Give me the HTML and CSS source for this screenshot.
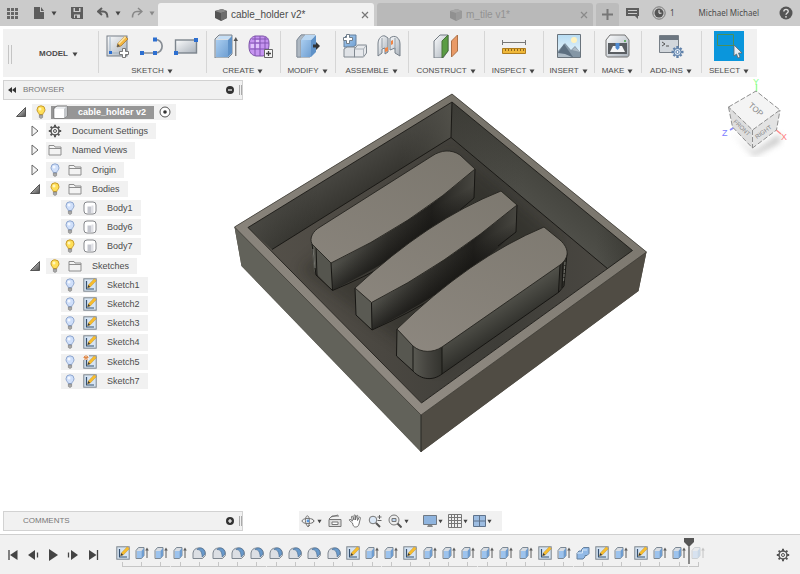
FILE: index.html
```html
<!DOCTYPE html>
<html lang="en">
<head>
<meta charset="utf-8">
<title>cable_holder v2</title>
<link rel="stylesheet" href="styles.css">
</head>
<body>
<svg class="defs" aria-hidden="true">
  <defs>
    <linearGradient id="steel" x1="0" y1="0" x2="1" y2="1"><stop offset="0" stop-color="#fbfcfd"/><stop offset="1" stop-color="#a9b1ba"/></linearGradient>
    <linearGradient id="blue" x1="0" y1="0" x2="1" y2="1"><stop offset="0" stop-color="#a9cdf0"/><stop offset="1" stop-color="#6f9fd2"/></linearGradient>
    <linearGradient id="sky" x1="0" y1="0" x2="0" y2="1"><stop offset="0" stop-color="#b7dcf3"/><stop offset="1" stop-color="#eef7fb"/></linearGradient>
    <linearGradient id="dark" x1="0" y1="0" x2="1" y2="1"><stop offset="0" stop-color="#e6e6e6"/><stop offset="1" stop-color="#4c4c4c"/></linearGradient>
  </defs>
  <symbol id="caret" viewBox="0 0 6 5"><path d="M.5.5h5L3 4.500z" fill="currentColor"/></symbol>
  <symbol id="cube" viewBox="0 0 14 14"><path d="M1 3 8 1l5 2v7l-6 3-6-3z" fill="#555"/><path d="M1 3 8 1l5 2-6 2z" fill="#8a8a8a"/><path d="M7 5v8l6-3V3z" fill="#6e6e6e"/></symbol>
  <symbol id="gear" viewBox="0 0 14 14"><path d="M7 .8v12.400M.8 7h12.400M2.600 2.600l8.800 8.800M11.400 2.600l-8.800 8.800" stroke="#555" stroke-width="2"/><circle cx="7" cy="7" r="4" fill="#f1f1f1" stroke="#555" stroke-width="1.500"/><circle cx="7" cy="7" r="1.500" fill="#f1f1f1" stroke="#555"/></symbol>
  <symbol id="bulb-on" viewBox="0 0 10 14"><path d="M5 .8a4 4 0 0 0-4 4C1 7 3 7.800 3.200 9.500h3.600C7 7.800 9 7 9 4.800a4 4 0 0 0-4-4z" fill="#ffdf57" stroke="#c79a2b"/><path d="M3.400 10h3.200v2.500L5 13.500l-1.600-1z" fill="#aaa" stroke="#777" stroke-width=".6"/><circle cx="4" cy="4" r="1.500" fill="#fff6c0"/></symbol>
  <symbol id="bulb-off" viewBox="0 0 10 14"><path d="M5 .8a4 4 0 0 0-4 4C1 7 3 7.800 3.200 9.500h3.600C7 7.800 9 7 9 4.800a4 4 0 0 0-4-4z" fill="#cfdffa" stroke="#8ea6cf"/><path d="M3.400 10h3.200v2.500L5 13.500l-1.600-1z" fill="#aaa" stroke="#777" stroke-width=".6"/><circle cx="4" cy="4" r="1.500" fill="#f4f8ff"/></symbol>
  <symbol id="folder" viewBox="0 0 14 12"><path d="M1 11V1.500h5l1 1.500h6v8z" fill="#f3f3f3" stroke="#8d8d8d"/><path d="M1 4.500h12" stroke="#8d8d8d"/></symbol>
  <symbol id="body" viewBox="0 0 14 14"><rect x="1" y="1" width="12" height="12" rx="3" fill="#fff" stroke="#85878b"/><path d="M4.500 5.500h4v6.500h-4z" fill="#c4c6ce"/><path d="M9.500 4.500v7.500" stroke="#e0e1e6" stroke-width="2"/></symbol>
  <symbol id="sketch" viewBox="0 0 14 14"><rect x=".8" y=".8" width="12.400" height="12.400" fill="#d6e4f3" stroke="#7d858d"/><path d="M3.500 3v8h7.500" fill="none" stroke="#34506f" stroke-width="1.200"/><path d="m4.500 9.800 1-3L11.300.7l2 2-6 6.200z" fill="#f8bd2c" stroke="#b98a2e" stroke-width=".4"/><path d="m4.500 9.800.9-2.800 1.800 1.900z" fill="#3a3a3a"/></symbol>
  <symbol id="extrude" viewBox="0 0 14 14"><path d="M1 4.500 3.500 1.500H9v8L6.500 12.500H1z" fill="#d9dde2" stroke="#7c8894"/><path d="M2 5h4.500v7H2z" fill="#9cc3ee"/><path d="M6.500 5 9 2v7.500l-2.500 3z" fill="#6f9dd0"/><path d="M12 12V3" stroke="#5c5c5c"/><path d="M10.200 4.500 12 1.500l1.800 3z" fill="#5c5c5c"/></symbol>
  <symbol id="fillet" viewBox="0 0 14 14"><path d="M1 12.500V7a6 6 0 0 1 6-5h1.500a5 5 0 0 1 4.800 5v2.500l-2.800 3z" fill="#dcdfe4" stroke="#7f8790"/><path d="M5 3.500C9 3.500 10 7 10.200 11l2.800-3C13 4 11 2 8 2 6.500 2 5.500 2.500 5 3.500z" fill="#6899cb" stroke="#4f7195" stroke-width=".7"/></symbol>
  <symbol id="combine" viewBox="0 0 14 14"><path d="M1 7 3 5h2.500V3.500l2-2H13v6l-2 2H9V11l-2 2H1z" fill="#91b9e6" stroke="#65809e"/><path d="M1 7h5.500V4H11" fill="none" stroke="#d7e7f7"/></symbol>
</svg>

<header class="topbar">
  <div class="quick">
    <button aria-label="Data panel"><svg width="13" height="13" viewBox="0 0 13 13"><path d="M1 1h3v3H1zM5 1h3v3H5zM9 1h3v3H9zM1 5h3v3H1zM5 5h3v3H5zM9 5h3v3H9zM1 9h3v3H1zM5 9h3v3H5zM9 9h3v3H9z" fill="#666"/></svg></button>
    <button class="split" aria-label="File"><svg width="12" height="14" viewBox="0 0 12 14"><path d="M1 1h6v5h4v7H1z" fill="#5d5d5d"/><path d="M8 1v4h3z" fill="#5d5d5d"/></svg><svg class="caret"><use href="#caret"/></svg></button>
    <button aria-label="Save"><svg width="12" height="12" viewBox="0 0 12 12"><path d="M0 0h12v12H1.500L0 10.500z" fill="#5d5d5d"/><path d="M2.500 1h7v4h-7zM3 7.500h6V11H3z" fill="#cbcbcb"/><path d="M4 1h4v3H4zM4 8.500h2V11H4z" fill="#5d5d5d"/></svg></button>
    <button class="split" aria-label="Undo"><svg width="12" height="12" viewBox="0 0 12 12"><path d="M5 1 1 4.500 5 8M1.500 4.500H6c3 0 4.500 2 4.500 6" fill="none" stroke="#5d5d5d" stroke-width="2"/></svg><svg class="caret"><use href="#caret"/></svg></button>
    <button class="split faded" aria-label="Redo"><svg width="12" height="12" viewBox="0 0 12 12"><path d="m7 1 4 3.500L7 8M10.500 4.500H6c-3 0-4.500 2-4.500 6" fill="none" stroke="#888" stroke-width="1.500"/></svg><svg class="caret"><use href="#caret"/></svg></button>
  </div>
  <div class="tab active"><svg width="14" height="14"><use href="#cube"/></svg><span>cable_holder v2*</span><button class="close" aria-label="Close cable_holder"><svg width="8" height="8" viewBox="0 0 8 8"><path d="m1 1 6 6M7 1 1 7" stroke="#777" stroke-width="1.200"/></svg></button></div>
  <div class="tab idle"><svg width="14" height="14" opacity=".4"><use href="#cube"/></svg><span>m_tile v1*</span><button class="close" aria-label="Close m_tile"><svg width="8" height="8" viewBox="0 0 8 8"><path d="m1 1 6 6M7 1 1 7" stroke="#8a8a8a" stroke-width="1.200"/></svg></button></div>
  <button class="newtab" aria-label="New design"><svg width="11" height="11" viewBox="0 0 11 11"><path d="M5.500 0v11M0 5.500h11" stroke="#777" stroke-width="2"/></svg></button>
  <div class="account">
    <button aria-label="Notifications"><svg width="13" height="12" viewBox="0 0 13 12"><path d="M0 1h13v8h-1v3L9 9H0z" fill="#5d5d5d"/><path d="M2 3.500h9M2 6.500h9" stroke="#cbcbcb"/></svg></button>
    <button class="jobs"><svg width="14" height="14" viewBox="0 0 14 14"><circle cx="7" cy="7" r="6.200" fill="#cbcbcb" stroke="#777"/><circle cx="7" cy="7" r="4.500" fill="#555"/><path d="M7 4v3.200h2.500" fill="none" stroke="#eee"/></svg>1</button>
    <button class="user">Michael Michael</button>
    <button aria-label="Help"><svg width="14" height="14" viewBox="0 0 14 14"><circle cx="7" cy="7" r="6.500" fill="#555"/><path d="M4.800 5.600c0-3 4.500-2.800 4.400-.2C9.200 7 7 7 7 8.800" fill="none" stroke="#ddd" stroke-width="1.400"/><circle cx="7" cy="10.800" r=".9" fill="#ddd"/></svg></button>
  </div>
</header>

<nav class="toolbar" aria-label="Toolbar">
  <div class="grip-cell"><span class="grip"></span><button class="model">MODEL<svg class="caret"><use href="#caret"/></svg></button></div>
  <div class="group"><div class="tools">
    <button aria-label="Create sketch"><svg width="24" height="24" viewBox="0 0 24 24"><rect x="1" y="2" width="20" height="20" fill="url(#steel)" stroke="#777f87"/><path d="M4 3v16h14" fill="none" stroke="#9eb3c6"/><rect x="3" y="17" width="3" height="3" fill="#2d6fd0"/><path d="m11 13 1-4 7-7 3 3-7 7z" fill="#f4b740" stroke="#9c7030" stroke-width=".7"/><path d="m12 9 7-7 1.200 1.200-7 7z" fill="#fbe3a4"/><path d="m11 13 .8-3 2.200 2.200z" fill="#555"/><path d="M16.500 14.500h3v3h3v3h-3v3h-3v-3h-3v-3h3z" fill="#fff" stroke="#777"/></svg></button>
    <button aria-label="Line"><svg width="24" height="24" viewBox="0 0 24 24"><path d="M2 19h13c10 0 9-14 0-13.500" fill="none" stroke="#888e95" stroke-width="1.700"/><path d="M0 17h4v4H0zM13 17h4v4h-4zM13 3.500h4v4h-4z" fill="#2d6fd0"/></svg></button>
    <button aria-label="Rectangle"><svg width="24" height="24" viewBox="0 0 24 24"><rect x="1.500" y="6" width="21" height="13" fill="url(#steel)" stroke="#7d858d" stroke-width="1.400"/><path d="M20 4h4v4h-4zM0 17h4v4H0z" fill="#2d6fd0"/></svg></button>
  </div><button class="menu">SKETCH<svg class="caret"><use href="#caret"/></svg></button></div>
  <div class="group"><div class="tools">
    <button aria-label="Extrude"><svg width="24" height="24" viewBox="0 0 24 24"><path d="M1 5 5 1h13v19l-4 4H1z" fill="#dadfe4" stroke="#76828e"/><path d="M2 6h12v17H2z" fill="url(#blue)"/><path d="m14 6 4-4v17l-4 4z" fill="#5f92c8"/><path d="m3 5 3-3h11l-3 3z" fill="#c5def5"/><path d="M21.800 22V5" stroke="#555"/><path d="m19.500 7 2.300-4L24 7z" fill="#555"/></svg></button>
    <button aria-label="Create form"><svg width="25" height="24" viewBox="0 0 25 24"><path d="M7 2h8c5 1 6 3 6 8s-2 11-6 12H8C3 21 1 18 1 12S3 3 7 2z" fill="#c594f0" stroke="#7b52a5"/><path d="M1 9h20M2 15h18M4 5h16M7 2v20M12 2v20M17 3v18" stroke="#8254b3" fill="none"/><path d="M8 6h3v2H8zM8 10h3v4H8zM3 10h3v4H3z" fill="#e0c4fb"/><path d="M16.500 15.500h8v8h-8z" fill="#f5f5f5" stroke="#666"/><path d="M20.500 17v5M18 19.500h5" stroke="#444" stroke-width="1.300"/></svg></button>
  </div><button class="menu">CREATE<svg class="caret"><use href="#caret"/></svg></button></div>
  <div class="group"><div class="tools">
    <button aria-label="Press pull"><svg width="24" height="24" viewBox="0 0 24 24"><path d="M1 6 5 1h14v17l-5 5H1z" fill="#d9dde2" stroke="#76828e"/><path d="M1 6 5 1h4L5 6v17H1z" fill="#aeb8c2" stroke="#76828e" stroke-width=".6"/><path d="M5 6h10v17H5z" fill="url(#blue)"/><path d="m15 6 5-5v17l-5 5z" fill="#5f92c8"/><path d="m5 6 4-5h11l-5 5z" fill="#bad7f2"/><path d="M17 10.500h3V8l4 4-4 4v-2.500h-3z" fill="#333"/></svg></button>
  </div><button class="menu">MODIFY<svg class="caret"><use href="#caret"/></svg></button></div>
  <div class="group"><div class="tools">
    <button aria-label="New component"><svg width="25" height="24" viewBox="0 0 25 24"><path d="M2 4 5 1h9v10l-3 2H2z" fill="url(#blue)" stroke="#65809e"/><path d="m2 15 3-2h8v10H2z" fill="#dfe2e6" stroke="#808890"/><path d="m12.500 15 3-4h9v8l-3 4h-9z" fill="#e7e9ec" stroke="#808890"/><path d="M12.500 15h9l3-4M21.500 15v8" fill="none" stroke="#a9b0b7"/><path d="M4.500.5h3v3h3v3h-3v3h-3v-3h-3v-3h3z" fill="#fff" stroke="#717e8a"/></svg></button>
    <button aria-label="Joint"><svg width="24" height="24" viewBox="0 0 24 24"><path d="M1 10c0-6 4-9 7-8l3 2v14l-3 2v-6l-3 1v4l-4 3z" fill="url(#steel)" stroke="#77808a"/><path d="M13 4c5-4 10 0 10 6v12l-5-3v-5l-5 2z" fill="url(#steel)" stroke="#77808a"/><path d="M5 4v10M18 4v12" stroke="#98a1aa"/><path d="m8 14 3-1v4l-3 1zM14 7l2-1v4l-2 1z" fill="#f08545"/></svg></button>
  </div><button class="menu">ASSEMBLE<svg class="caret"><use href="#caret"/></svg></button></div>
  <div class="group"><div class="tools">
    <button aria-label="Offset plane"><svg width="26" height="24" viewBox="0 0 26 24"><path d="m1 7 6-6h8v16l-5 7H1z" fill="url(#steel)" stroke="#737b82"/><path d="m9 7 6-6v16l-6 7z" fill="#5a9c43" stroke="#487338"/><path d="m18.500 7 6-6v16l-6 6z" fill="#e99a66" stroke="#ad7147"/></svg></button>
  </div><button class="menu">CONSTRUCT<svg class="caret"><use href="#caret"/></svg></button></div>
  <div class="group"><div class="tools">
    <button aria-label="Measure"><svg width="24" height="24" viewBox="0 0 24 24"><path d="M0 8.500h24M.5 6v5M23.500 6v5" stroke="#777"/><path d="M.5 14.500h23v5H.5z" fill="#efb83a" stroke="#b07d1d"/><path d="M3.500 15v2M6.500 15v2M9.500 15v2M12.500 15v2M15.500 15v2M18.500 15v2M21.500 15v2" stroke="#8c651e"/></svg></button>
  </div><button class="menu">INSPECT<svg class="caret"><use href="#caret"/></svg></button></div>
  <div class="group"><div class="tools">
    <button aria-label="Insert image"><svg width="24" height="24" viewBox="0 0 24 24"><path d="M.5.500h23v23H.5z" fill="url(#sky)" stroke="#69737c"/><circle cx="17" cy="6" r="3" fill="#fff2be"/><path d="M1 17 8 9l6 7 4-4 5 6v5H1z" fill="#8496a5"/><path d="m7 10 9 13H1v-4z" fill="#5d6f80"/><path d="m1 19 7 1 7 3H1zM15 16l3-3 5 5z" fill="#acbac5"/></svg></button>
  </div><button class="menu">INSERT<svg class="caret"><use href="#caret"/></svg></button></div>
  <div class="group"><div class="tools">
    <button aria-label="3D print"><svg width="25" height="24" viewBox="0 0 25 24"><path d="m1 6 4-5h15l4 5v15c0 1-1 2-2 2H3c-1 0-2-1-2-2z" fill="url(#steel)" stroke="#737373"/><path d="M3 9h19v11H3z" fill="#5a5e62"/><path d="m5 18 3-6h9l3 6z" fill="#f4f5f6"/><path d="M10.500 9h4v5l-2 2-2-2z" fill="#4f8ad0"/><circle cx="20" cy="7" r="1" fill="#47a047"/></svg></button>
  </div><button class="menu">MAKE<svg class="caret"><use href="#caret"/></svg></button></div>
  <div class="group"><div class="tools">
    <button aria-label="Scripts and add-ins"><svg width="25" height="24" viewBox="0 0 25 24"><path d="M.5 1.500h19v17H.5z" fill="#d2d7dc" stroke="#777f87"/><path d="M1 2h18v4H1z" fill="#6c7680"/><path d="m3 8 3 2-3 2M7 12h3" fill="none" stroke="#555"/><path d="M18.500 12v12M12.500 18h12M14.500 14l8 8M22.500 14l-8 8" stroke="#6081a9" stroke-width="2.400"/><circle cx="18.500" cy="18" r="3.600" fill="#d6e6f6" stroke="#6081a9"/><circle cx="18.500" cy="18" r="1.500" fill="#fff" stroke="#6081a9"/></svg></button>
  </div><button class="menu">ADD-INS<svg class="caret"><use href="#caret"/></svg></button></div>
  <div class="group"><div class="tools">
    <button class="picked" aria-label="Select"><svg width="30" height="30" viewBox="0 0 30 30"><path d="M3.500 3.500h16v11h-16z" fill="none" stroke="#4a8f5c"/><path d="M20 14v11l2.500-2 1.500 4 2-1-1.500-4H28z" fill="#e8eef3" stroke="#666" stroke-width=".8"/></svg></button>
  </div><button class="menu">SELECT<svg class="caret"><use href="#caret"/></svg></button></div>
</nav>

<main class="workspace">
  <svg class="scene" width="418" height="364" viewBox="232 91 418 364" role="img" aria-label="Cable holder model">
    <defs>
      <linearGradient id="top" gradientUnits="userSpaceOnUse" x1="400" y1="420" x2="520" y2="130"><stop offset="0" stop-color="#928c84"/><stop offset="1" stop-color="#78746b"/></linearGradient>
      <linearGradient id="wallL" gradientUnits="userSpaceOnUse" x1="320" y1="185" x2="352" y2="235"><stop offset="0" stop-color="#464540"/><stop offset=".55" stop-color="#35342f"/><stop offset="1" stop-color="#24231f"/></linearGradient>
      <linearGradient id="wallLs" x1="0" x2="1" y1="0" y2="0"><stop offset="0" stop-color="#4c4b45" stop-opacity=".5"/><stop offset=".35" stop-color="#30302b" stop-opacity="0"/><stop offset=".75" stop-color="#4c4b45" stop-opacity="0"/><stop offset="1" stop-color="#55544d" stop-opacity=".8"/></linearGradient>
      <linearGradient id="wallR" gradientUnits="userSpaceOnUse" x1="550" y1="180" x2="525" y2="212"><stop offset="0" stop-color="#45453f"/><stop offset="1" stop-color="#51514b"/></linearGradient>
      <linearGradient id="wallRs" x1="0" x2="1" y1="0" y2="0"><stop offset="0" stop-color="#33322d" stop-opacity=".5"/><stop offset=".4" stop-color="#33322d" stop-opacity="0"/><stop offset=".8" stop-color="#33322d" stop-opacity="0"/><stop offset="1" stop-color="#2c2b26" stop-opacity=".4"/></linearGradient>
      <linearGradient id="floor" x1="0" x2="1" y1="0" y2="0"><stop offset="0" stop-color="#55514a"/><stop offset=".35" stop-color="#4a4741"/><stop offset=".65" stop-color="#3e3d38"/><stop offset="1" stop-color="#4d4a44"/></linearGradient>
      <linearGradient id="side1" x1="0" x2="1" y1="0" y2="0"><stop offset="0" stop-color="#50504a"/><stop offset=".4" stop-color="#2f2e2a"/><stop offset=".7" stop-color="#201f1c"/><stop offset="1" stop-color="#484741"/></linearGradient>
      <linearGradient id="drop" gradientUnits="userSpaceOnUse" x1="410" y1="222" x2="425" y2="248"><stop offset="0" stop-color="#11100e" stop-opacity="0"/><stop offset="1" stop-color="#11100e" stop-opacity=".85"/></linearGradient>
      <linearGradient id="drop2" gradientUnits="userSpaceOnUse" x1="445" y1="262" x2="460" y2="288"><stop offset="0" stop-color="#11100e" stop-opacity="0"/><stop offset="1" stop-color="#11100e" stop-opacity=".85"/></linearGradient>
      <linearGradient id="side3" gradientUnits="userSpaceOnUse" x1="490" y1="308" x2="508" y2="336"><stop offset="0" stop-color="#53534c"/><stop offset="1" stop-color="#2a2a26"/></linearGradient>
      <linearGradient id="round" x1="0" x2="1" y1="0" y2="0"><stop offset="0" stop-color="#5a5a53"/><stop offset=".5" stop-color="#45443f"/><stop offset="1" stop-color="#33332e"/></linearGradient>
      <filter id="soft" x="-20%" y="-20%" width="140%" height="140%"><feGaussianBlur stdDeviation="7"/></filter>
      <clipPath id="well"><path d="M248 227.500 452 102 632.500 250.500 421.500 403z"/></clipPath>
    </defs>
    <path d="M234.500 227 452 94l194.500 158-8 39L421 452 241.500 266z" fill="#504c44"/>
    <path d="M234.500 227 421 415v37L241.500 266z" fill="#62625a"/>
    <path d="M421 415 646.500 252l-8 39L421 452z" fill="#504c44"/>
    <path d="M234.500 227 452 94l194.500 158L421 415z" fill="url(#top)" stroke="#3b3934" stroke-width=".7"/>
    <path d="M421 415v37" stroke="#292824"/>
    <g clip-path="url(#well)">
      <path d="M248 227.500 452 102 632.500 250.500 421.500 403z" fill="url(#floor)"/>
      <path d="M300 270 450 150 560 240 440 370z" fill="#24231f" opacity=".35" filter="url(#soft)"/>
      <path d="M452 102 248 227.500l24 22L451 137.500z" fill="url(#wallL)"/>
      <path d="M452 102 248 227.500l24 22L451 137.500z" fill="url(#wallLs)"/>
      <path d="M452 102l180.500 148.500L608 269 451 137.500z" fill="url(#wallR)"/>
      <path d="M452 102l180.500 148.500L608 269 451 137.500z" fill="url(#wallRs)"/>
      <path d="M272 249.500 451 137.500 608 269M452 102l-1 35.500" fill="none" stroke="#161512" stroke-width=".9"/>
    </g>
    <path d="M248 227.500 452 102 632.500 250.500 421.500 403z" fill="none" stroke="#1d1c19" stroke-width=".9"/>

    <path d="M310.500 240 314 271l18.500 19.500L332 262z" fill="#55554e"/>
    <path d="M331 263Q413 224 475 169l-1 29q-52 48-141.500 92.500z" fill="url(#side1)"/>
    <path d="M331 263Q413 224 475 169l-1 29q-52 48-141.500 92.500z" fill="url(#drop)"/>
    <path d="M312 244l4 31 16.500 15.500Q400 262 428 236M316 246l1 30M331 263l1.500 27.500M475 169l-1 29-14 12" fill="none" stroke="#171613"/>
    <path d="M313 249l2 19" stroke="#8b8b85" stroke-width=".8"/>
    <path d="M331 263 312 244c-3-6 1-13 8-17L432 156c9-6 19-7 28-1l15 14Q413 224 331 263z" fill="url(#top)" stroke="#25241f" stroke-width=".9"/>

    <path d="M355 288l1 27 16 15-.5-27.500z" fill="#5a5a53"/>
    <path d="M371.500 302.500Q444 266 517 205l-1 27q-60 57-144 98z" fill="url(#side1)"/>
    <path d="M371.500 302.500Q444 266 517 205l-1 27q-60 57-144 98z" fill="url(#drop2)"/>
    <path d="M355 288l1 27 16 15q40-18 64-34M371.500 302.500l.5 27.500M517 205l-1 27-18 14" fill="none" stroke="#171613"/>
    <path d="M355 288Q428 220 501 191l16 14Q444 266 371.500 302.500z" fill="url(#top)" stroke="#25241f" stroke-width=".9"/>

    <path d="M397 329l-.5 27L413 371V346z" fill="#575750"/>
    <path d="M413 345v26c8 9 20 10 29 3v-28z" fill="url(#round)"/>
    <path d="M442 347 560 264l-1 28L442 374z" fill="url(#side3)"/>
    <path d="M560 264c5-3 7-8 7-14l-3 35-5 7z" fill="#33322d"/>
    <path d="M397 329l-.5 27L413 371c8 9 20 10 29 3l117-82 5-6 3-33M413 345v26M442 347v27M560 265l-1.500 27M563 262l-1 26" fill="none" stroke="#171613"/>
    <path d="M565 262l-1.500 20" stroke="#85857e" stroke-width=".8" stroke-dasharray="3 1"/>
    <path d="M397 329Q470 258 544 227l16 13c10 9 9 18 0 25L442 347c-9 6-21 6-29-1z" fill="url(#top)" stroke="#25241f" stroke-width=".9"/>
  </svg>

  <section class="browser">
    <div class="panel-head"><button aria-label="Collapse browser"><svg width="8" height="6" viewBox="0 0 8 6"><path d="M4 0v6L0 3zM8 0v6L4 3z" fill="#333"/></svg></button><h2>BROWSER</h2><button class="round" aria-label="Minimise"><svg width="8" height="8" viewBox="0 0 8 8"><circle cx="4" cy="4" r="4" fill="#333"/><path d="M2 4h4" stroke="#fff" stroke-width="1.200"/></svg></button><span class="edge"></span></div>
    <ul class="tree">
      <li class="root"><svg class="twist" viewBox="0 0 10 10"><path d="M.5 9.500h9v-9z" fill="url(#dark)" stroke="#555"/></svg><div class="node"><svg class="bulb"><use href="#bulb-on"/></svg><span class="chip"><svg width="15" height="14" viewBox="0 0 15 14"><path d="m1 3 3-2h10v10l-3 2H1z" fill="#eceef0" stroke="#777"/><path d="m11 4 3-3v10l-3 2z" fill="#c5c8cb"/><path d="M1.500 4H11v9H1.500z" fill="#fff"/></svg>cable_holder v2</span><svg width="12" height="12" viewBox="0 0 12 12"><circle cx="6" cy="6" r="5" fill="#fff" stroke="#555"/><circle cx="6" cy="6" r="1.800" fill="#333"/></svg></div></li>
      <li class="l1"><svg class="twist" viewBox="0 0 10 12"><path d="M2 1v10l6-5z" fill="#f4f4f4" stroke="#666"/></svg><div class="node plain"><svg width="14" height="14"><use href="#gear"/></svg><span>Document Settings</span></div></li>
      <li class="l1"><svg class="twist" viewBox="0 0 10 12"><path d="M2 1v10l6-5z" fill="#f4f4f4" stroke="#666"/></svg><div class="node plain"><svg width="14" height="12"><use href="#folder"/></svg><span>Named Views</span></div></li>
      <li class="l1"><svg class="twist" viewBox="0 0 10 12"><path d="M2 1v10l6-5z" fill="#f4f4f4" stroke="#666"/></svg><div class="node"><svg class="bulb"><use href="#bulb-off"/></svg><svg width="14" height="12"><use href="#folder"/></svg><span>Origin</span></div></li>
      <li class="l1"><svg class="twist" viewBox="0 0 10 10"><path d="M.5 9.500h9v-9z" fill="url(#dark)" stroke="#555"/></svg><div class="node"><svg class="bulb"><use href="#bulb-on"/></svg><svg width="14" height="12"><use href="#folder"/></svg><span>Bodies</span></div></li>
      <li class="l2"><div class="node"><svg class="bulb"><use href="#bulb-off"/></svg><svg width="14" height="14"><use href="#body"/></svg><span>Body1</span></div></li>
      <li class="l2"><div class="node"><svg class="bulb"><use href="#bulb-off"/></svg><svg width="14" height="14"><use href="#body"/></svg><span>Body6</span></div></li>
      <li class="l2"><div class="node"><svg class="bulb"><use href="#bulb-on"/></svg><svg width="14" height="14"><use href="#body"/></svg><span>Body7</span></div></li>
      <li class="l1"><svg class="twist" viewBox="0 0 10 10"><path d="M.5 9.500h9v-9z" fill="url(#dark)" stroke="#555"/></svg><div class="node"><svg class="bulb"><use href="#bulb-on"/></svg><svg width="14" height="12"><use href="#folder"/></svg><span>Sketches</span></div></li>
      <li class="l2"><div class="node"><svg class="bulb"><use href="#bulb-off"/></svg><svg width="14" height="14"><use href="#sketch"/></svg><span>Sketch1</span></div></li>
      <li class="l2"><div class="node"><svg class="bulb"><use href="#bulb-off"/></svg><svg width="14" height="14"><use href="#sketch"/></svg><span>Sketch2</span></div></li>
      <li class="l2"><div class="node"><svg class="bulb"><use href="#bulb-off"/></svg><svg width="14" height="14"><use href="#sketch"/></svg><span>Sketch3</span></div></li>
      <li class="l2"><div class="node"><svg class="bulb"><use href="#bulb-off"/></svg><svg width="14" height="14"><use href="#sketch"/></svg><span>Sketch4</span></div></li>
      <li class="l2"><div class="node"><svg class="bulb"><use href="#bulb-off"/></svg><svg width="14" height="14" viewBox="0 0 14 14"><use href="#sketch" width="14" height="14"/><path d="M0 0h6v5H0z" fill="#f1f1f1"/><path d="M3 0v5M.5 2.500h5M1 1l4 3.500M5 1 1 4.500" stroke="#e08a4a"/></svg><span>Sketch5</span></div></li>
      <li class="l2"><div class="node"><svg class="bulb"><use href="#bulb-off"/></svg><svg width="14" height="14"><use href="#sketch"/></svg><span>Sketch7</span></div></li>
    </ul>
  </section>

  <svg class="viewcube" width="72" height="80" viewBox="719 77 72 80" role="img" aria-label="View cube">
    <defs><filter id="blur"><feGaussianBlur stdDeviation="3"/></filter></defs>
    <path d="M732 132 754 152l26-18v8l-26 14z" fill="#999" opacity=".6" filter="url(#blur)"/>
    <path d="M756.500 84v8" stroke="#9dff9d" stroke-width="1.500"/><path d="m738 125-8 5" stroke="#8a8aff" stroke-width="1.500"/><path d="m775 129 6 5" stroke="#ff8a8a" stroke-width="1.500"/>
    <path d="M728.500 107 756 91l24 19-27.500 20z" fill="#f4f4f4"/><path d="M728.500 107l24 23v18l-20-21z" fill="#dedede"/><path d="M780 110l-27.500 20v18l24-18z" fill="#e3e3e3"/>
    <path d="M728.500 107 756 91l24 19-27.500 20zM728.500 107l4 20 20 21 24-18 3.500-20M752.500 130v18" fill="none" stroke="#8f8f8f" stroke-dasharray="5 2"/>
    <text class="face" transform="translate(748 106) rotate(42)">TOP</text>
    <text class="face small" transform="translate(733 122) rotate(44)">FRONT</text>
    <text class="face small" transform="translate(757 139) rotate(-36)">RIGHT</text>
    <text class="axis" x="753" y="85" fill="#8cff8c">Y</text><text class="axis" x="722" y="136" fill="#8080ff">Z</text><text class="axis" x="781" y="140" fill="#ff8080">X</text>
  </svg>

  <section class="comments panel-head"><h2>COMMENTS</h2><button class="round" aria-label="Add comment"><svg width="8" height="8" viewBox="0 0 8 8"><circle cx="4" cy="4" r="4" fill="#333"/><path d="M2 4h4M4 2v4" stroke="#fff" stroke-width="1.200"/></svg></button><span class="edge"></span></section>

  <nav class="navbar" aria-label="View controls">
    <button class="split" aria-label="Orbit"><svg width="14" height="14" viewBox="0 0 14 14"><ellipse cx="7" cy="7" rx="6" ry="2.600" fill="none" stroke="#777"/><path d="M5 10c-1.500-6 .5-9 2-8s2 7 .5 10" fill="none" stroke="#777"/><path d="m5 10 2 3 2-2M11 5l2 2-2 2" fill="none" stroke="#777"/><circle cx="7" cy="7" r="1.400" fill="#5b9ae0"/></svg><svg class="caret"><use href="#caret"/></svg></button>
    <button aria-label="Look at"><svg width="14" height="14" viewBox="0 0 14 14"><path d="m3 3 7-2M1 5l3-3h7" fill="none" stroke="#777"/><path d="M1 5.500h12v7H1z" fill="#ddd" stroke="#777"/><path d="M4 8h6v2.500H4z" fill="#fff" stroke="#777"/></svg></button>
    <button aria-label="Pan"><svg width="14" height="14" viewBox="0 0 14 14"><path d="M4.500 9 1.500 6.500c-.8-1 .5-1.500 1.500-.7L4.500 7 3.500 3c0-1.200 1.200-1 1.500 0L6 6V1.800c0-1.200 1.500-1.200 1.500 0V6l1-4c.3-1 1.500-.8 1.400.2L9.500 6.500l1.500-3c.6-.8 1.600-.3 1.400.6L11 10c-.5 2-1.500 3-3.500 3S5 11.500 4.500 9z" fill="#fff" stroke="#666" stroke-width=".9"/></svg></button>
    <button aria-label="Zoom"><svg width="14" height="14" viewBox="0 0 14 14"><circle cx="5" cy="6" r="3.800" fill="#dce9f7" stroke="#777"/><path d="m8 9 4 4" stroke="#555" stroke-width="2"/><path d="M11.500 1v4M9.500 3h4M9.500 6.500h4" stroke="#666"/></svg></button>
    <button class="split" aria-label="Fit"><svg width="14" height="14" viewBox="0 0 14 14"><circle cx="6" cy="6" r="5" fill="#eee" stroke="#777"/><path d="M4 4.500h4v3H4z" fill="#bcd4ee" stroke="#777"/><path d="m9.500 9.500 4 4" stroke="#555" stroke-width="2"/></svg><svg class="caret"><use href="#caret"/></svg></button>
    <div class="views">
      <button class="split" aria-label="Display settings"><svg width="14" height="14" viewBox="0 0 14 14"><path d="M.5 1.500h13v9H.5z" fill="#8fb4de" stroke="#707983"/><path d="M5 11h4l1 2H4z" fill="#888"/></svg><svg class="caret"><use href="#caret"/></svg></button>
      <button class="split" aria-label="Grid"><svg width="14" height="14" viewBox="0 0 14 14"><path d="M.5.500h13v13H.5zM3.500 0v14M6.500 0v14M9.500 0v14M0 3.500h14M0 6.500h14M0 9.500h14" fill="none" stroke="#777"/></svg><svg class="caret"><use href="#caret"/></svg></button>
      <button class="split" aria-label="Viewports"><svg width="13" height="12" viewBox="0 0 13 12"><path d="M.5.500h12v11H.5zM6.500 0v12M0 6h13" fill="#9dbde2" stroke="#5f738c"/></svg><svg class="caret"><use href="#caret"/></svg></button>
    </div>
  </nav>
</main>

<footer class="timeline">
  <div class="playback">
    <button aria-label="Go to start"><svg width="12" height="12" viewBox="0 0 12 12"><path d="M2 1v10" stroke="#444" stroke-width="1.300"/><path d="M10.500 1v10L3 6z" fill="#444"/></svg></button>
    <button aria-label="Step back"><svg width="12" height="12" viewBox="0 0 12 12"><path d="M8 1v10L1 6z" fill="#444"/><path d="M10.500 3.500v5" stroke="#444" stroke-width="1.300"/></svg></button>
    <button aria-label="Play"><svg width="12" height="12" viewBox="0 0 12 12"><path d="M2 0v12l9-6z" fill="#444"/></svg></button>
    <button aria-label="Step forward"><svg width="12" height="12" viewBox="0 0 12 12"><path d="M4 1v10l7-5z" fill="#444"/><path d="M1.500 3.500v5" stroke="#444" stroke-width="1.300"/></svg></button>
    <button aria-label="Go to end"><svg width="12" height="12" viewBox="0 0 12 12"><path d="M10.500 1v10" stroke="#444" stroke-width="1.300"/><path d="M2 1v10l7.500-5z" fill="#444"/></svg></button>
  </div>
  <ol class="features">
    <li><svg><use href="#sketch"/></svg></li>
    <li><svg><use href="#extrude"/></svg></li>
    <li><svg><use href="#extrude"/></svg></li>
    <li><svg><use href="#extrude"/></svg></li>
    <li><svg><use href="#fillet"/></svg></li>
    <li><svg><use href="#fillet"/></svg></li>
    <li><svg><use href="#fillet"/></svg></li>
    <li><svg><use href="#fillet"/></svg></li>
    <li><svg><use href="#fillet"/></svg></li>
    <li><svg><use href="#fillet"/></svg></li>
    <li><svg><use href="#fillet"/></svg></li>
    <li><svg><use href="#fillet"/></svg></li>
    <li><svg><use href="#sketch"/></svg></li>
    <li><svg><use href="#extrude"/></svg></li>
    <li><svg><use href="#extrude"/></svg></li>
    <li><svg><use href="#sketch"/></svg></li>
    <li><svg><use href="#extrude"/></svg></li>
    <li><svg><use href="#extrude"/></svg></li>
    <li><svg><use href="#extrude"/></svg></li>
    <li><svg><use href="#extrude"/></svg></li>
    <li><svg><use href="#extrude"/></svg></li>
    <li><svg><use href="#extrude"/></svg></li>
    <li><svg><use href="#sketch"/></svg></li>
    <li><svg><use href="#extrude"/></svg></li>
    <li><svg><use href="#combine"/></svg></li>
    <li><svg><use href="#sketch"/></svg></li>
    <li><svg><use href="#extrude"/></svg></li>
    <li><svg><use href="#sketch"/></svg></li>
    <li><svg><use href="#extrude"/></svg></li>
    <li><svg><use href="#extrude"/></svg></li>
    <li class="rolled"><svg><use href="#extrude"/></svg><span class="marker"><svg viewBox="0 0 10 26"><path d="M0 0h10v4L6 8H4L0 4z" fill="#555"/><path d="M5 6v20" stroke="#555" stroke-width="1.300"/></svg></span></li>
  </ol>
  <button class="settings" aria-label="Timeline settings"><svg width="14" height="14"><use href="#gear"/></svg></button>
</footer>
</body>
</html>
```

FILE: styles.css
```css
* { box-sizing: border-box; }

body {
  margin: 0;
  min-height: 100vh;
  display: flex;
  flex-direction: column;
  background: #fff;
  color: #4c4c4c;
  font: 9px/12px "Liberation Sans", Arial, sans-serif;
}

button {
  display: flex;
  align-items: center;
  margin: 0;
  padding: 0;
  border: 0;
  background: none;
  color: inherit;
  font: inherit;
  white-space: nowrap;
}

svg { display: block; flex: none; }
ul, ol { margin: 0; padding: 0; list-style: none; }
h2 { margin: 0; font: inherit; }

.defs { position: absolute; width: 0; height: 0; }
.caret { width: 6px; height: 5px; color: #444; }

/* Top bar */
.topbar {
  display: flex;
  align-items: stretch;
  height: 26px;
  padding-top: 3px;
  background: #cbcbcb;
}
.quick {
  display: flex;
  align-items: center;
  gap: 14px;
  flex: none;
  width: 158px;
  padding: 0 0 3px 6px;
}
.quick .split { gap: 6px; }
.quick .faded { margin-left: -4px; }
.faded .caret { color: #888; }

.tab {
  display: flex;
  align-items: center;
  flex: 0 1 216px;
  margin-right: 3px;
  padding: 0 5px 0 56px;
  gap: 3px;
  border-radius: 3px 3px 0 0;
  background: #f1f1f1;
  font-size: 10px;
}
.tab.idle { padding-left: 72px; background: #b9b9b9; color: #929292; }
.tab .close { margin-left: auto; }
.newtab {
  justify-content: center;
  width: 23px;
  border-radius: 3px 3px 0 0;
  background: #bcbcbc;
}
.account {
  display: flex;
  align-items: center;
  margin-left: auto;
  padding: 0 7px 3px 0;
  font: 8px/12px "Noto Sans", sans-serif;
}
.jobs { gap: 4px; margin: 0 24px 0 13px; }
.user { margin-right: 20px; }

/* Toolbar */
.toolbar {
  display: grid;
  grid-template-columns: 95px 108px 74px 55px 73px 76px 59px 51px 47px 60px 56px;
  align-self: flex-start;
  height: 48px;
  margin: 3px 0 0 3px;
  background: #f1f1f1;
  font-size: 8px;
}
.grip-cell { display: flex; align-items: center; gap: 27px; padding: 2px 0 0 5px; }
.grip { width: 4px; height: 19px; border: solid #c4c4c4; border-width: 0 1px; }
.model { gap: 4px; font-weight: bold; }
.group {
  display: grid;
  grid-template-rows: 34px 14px;
  justify-items: center;
  background: linear-gradient(#d6d6d6, #d6d6d6) 0 2px / 1px 42px no-repeat;
}
.tools { display: flex; align-items: center; gap: 10px; }
.menu { gap: 3px; padding-top: 2px; }
.picked { background: #0a96dc; }

/* Work area */
.workspace {
  flex: 1;
  display: grid;
  grid-template-columns: 240px 1fr auto;
  grid-template-rows: 1fr 20px;
  padding: 3px;
}
.scene { grid-area: 1 / 1 / 3 / 4; margin: 11px 0 0 229px; }
.browser { grid-area: 1 / 1; z-index: 1; }
.viewcube { grid-area: 1 / 3; margin: -3px 6px 0 0; }
.comments { grid-area: 2 / 1; }

.panel-head {
  display: flex;
  align-items: center;
  height: 20px;
  padding-left: 4px;
  border: 1px solid #d2d2d2;
  background: #f1f1f1;
  color: #777;
  font-size: 8px;
}
.panel-head h2 { margin-left: 7px; }
.comments h2 { margin-left: 15px; }
.round { margin-left: auto; }
.edge { width: 3px; height: 10px; margin: 0 0 0 5px; border: solid #aaa; border-width: 0 1px; }

.tree {
  display: grid;
  grid-template-rows: repeat(15, 1fr);
  gap: 3px;
  height: 285px;
  margin-top: 4px;
}
.tree li { display: flex; align-items: center; }
.twist { width: 10px; height: 12px; margin-right: 6px; }
.root { padding-left: 13px; }
.l1 { padding-left: 27px; }
.l2 { padding-left: 58px; }
.node {
  display: flex;
  align-items: center;
  align-self: stretch;
  gap: 8px;
  padding: 0 8px 0 4px;
  background: #f1f1f1;
}
.node span { padding-left: 2px; }
.node.plain { padding-left: 2px; }
.bulb { width: 10px; height: 14px; }
.root .node { gap: 5px; padding-right: 5px; }
.node .chip {
  display: flex;
  align-items: center;
  gap: 10px;
  height: 13px;
  padding-right: 8px;
  background: #969696;
  color: #fff;
  font-weight: bold;
}

.face { font: 8px "Liberation Sans", sans-serif; fill: #888; }
.face.small { font-size: 6px; }
.axis { font: 9px "Liberation Sans", sans-serif; }

.navbar {
  grid-area: 2 / 1 / 3 / 4;
  justify-self: center;
  display: flex;
  align-items: center;
  gap: 6px;
  padding: 0 10px 0 2px;
  background: #f1f1f1;
}
.navbar .split { gap: 2px; }
.navbar .caret { width: 5px; }
.views { display: flex; gap: 5px; margin-left: 8px; }
.navbar .views .split { gap: 1px; }

/* Timeline */
.timeline {
  display: flex;
  align-items: center;
  height: 40px;
  padding: 0 10px 0 7px;
  border-top: 1px solid #cfcfcf;
  background: #f1f1f1;
}
.playback { display: flex; gap: 8px; margin-right: 14px; }
.features { display: flex; flex: 0 1 595px; height: 25px; }
.features li {
  position: relative;
  flex: 1;
  display: flex;
  justify-content: center;
  padding-top: 4px;
  background:
    linear-gradient(#c6c6c6, #c6c6c6) 50% 100% / 1px 5px no-repeat,
    linear-gradient(#c6c6c6, #c6c6c6) 100% 100% / 100% 1px no-repeat;
}
.features li:first-child { background-size: 1px 5px, 50% 1px; }
.features li:last-child { background-size: 1px 5px, 50% 1px; background-position: 50% 100%, 0 100%; }
.features li > svg { width: 14px; height: 14px; }
.rolled > svg { opacity: .3; }
.marker { position: absolute; top: -4px; left: -5px; width: 10px; height: 26px; }
.settings { margin-left: auto; }
```
